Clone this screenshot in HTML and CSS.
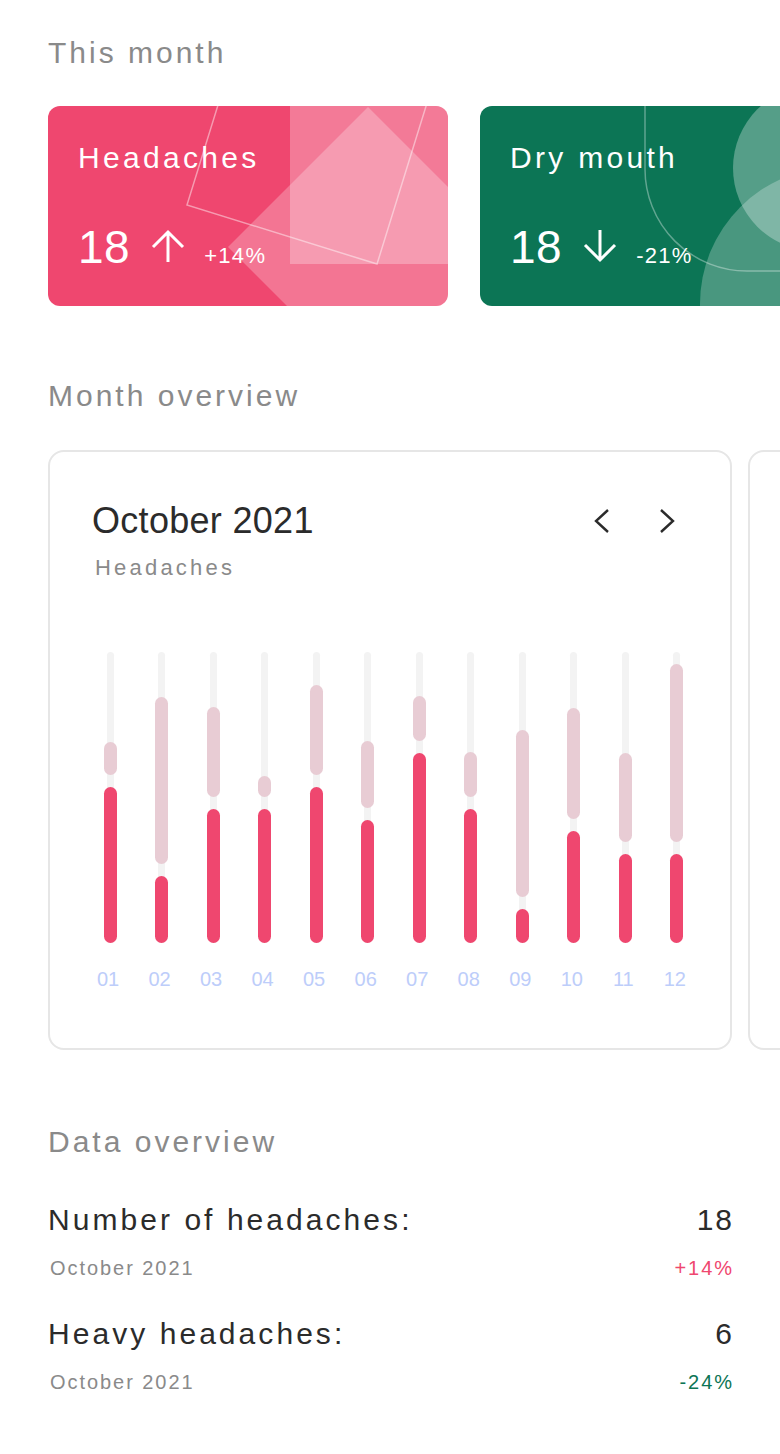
FILE: index.html
```html
<!DOCTYPE html>

<html>
    <head>
        <title>Overview</title>
        <link rel="stylesheet" href="styles.css">
    </head>
    <body>
        <div class = "block block_first">
            <h2 class = "block_title">This month</h2>
            <div class = "strip">
                <div class = "stat_card stat_pink">
                    <svg class = "stat_decor" viewBox = "0 0 400 200" width = "400" height = "200">
                        <rect x = "242" y = "0" width = "158" height = "158" fill = "#ffffff" fill-opacity = "0.28"/>
                        <polygon points = "320,1 460,141 320,281 180,141" fill = "#ffffff" fill-opacity = "0.25"/>
                        <rect x = "-99.5" y = "-99.5" width = "199" height = "199" fill = "none" stroke = "#ffffff" stroke-opacity = "0.45" stroke-width = "1.5" transform = "translate(263.5 33.5) rotate(17.25)"/>
                    </svg>
                    <div class = "stat_name">Headaches</div>
                    <div class = "stat_row">
                        <span class = "stat_num">18</span>
                        <svg class = "stat_arrow" viewBox = "0 0 34 34" width = "34" height = "34">
                            <path d = "M17 33 V3 M2 18 L17 3 L32 18" fill = "none" stroke = "#ffffff" stroke-width = "3"/>
                        </svg>
                        <span class = "stat_pct">+14%</span>
                    </div>
                </div>
                <div class = "stat_card stat_green">
                    <svg class = "stat_decor" viewBox = "0 0 400 200" width = "400" height = "200">
                        <circle cx = "336" cy = "62" r = "83" fill = "#ffffff" fill-opacity = "0.3"/>
                        <circle cx = "357" cy = "198" r = "137" fill = "#ffffff" fill-opacity = "0.25"/>
                        <path d = "M165 -5 V63 A102 102 0 0 0 267 165 H420" fill = "none" stroke = "#ffffff" stroke-opacity = "0.35" stroke-width = "1.5"/>
                    </svg>
                    <div class = "stat_name">Dry mouth</div>
                    <div class = "stat_row">
                        <span class = "stat_num">18</span>
                        <svg class = "stat_arrow" viewBox = "0 0 34 34" width = "34" height = "34">
                            <path d = "M17 1 V31 M2 16 L17 31 L32 16" fill = "none" stroke = "#ffffff" stroke-width = "3"/>
                        </svg>
                        <span class = "stat_pct">-21%</span>
                    </div>
                </div>
            </div>
        </div>

        <div class = "block block_month">
            <h2 class = "block_title">Month overview</h2>
            <div class = "strip strip_tight">
                <div class = "chart_card">
                    <div class = "chart_head">
                        <div class = "chart_month">October 2021</div>
                        <div class = "chart_nav">
                            <svg viewBox = "0 0 20 28" width = "20" height = "28"><polyline points = "16,3 4,14 16,25" fill = "none" stroke = "#2b2b2b" stroke-width = "2.4"/></svg>
                            <svg viewBox = "0 0 20 28" width = "20" height = "28"><polyline points = "4,3 16,14 4,25" fill = "none" stroke = "#2b2b2b" stroke-width = "2.4"/></svg>
                        </div>
                    </div>
                    <div class = "chart_sub">Headaches</div>
                    <div class = "chart">
                        <div class = "chart_col"><div class = "track"><div class = "seg seg_light" style = "height: 33px"></div><div class = "seg seg_main" style = "height: 156px"></div></div><span class = "day">01</span></div>
                        <div class = "chart_col"><div class = "track"><div class = "seg seg_light" style = "height: 167px"></div><div class = "seg seg_main" style = "height: 67px"></div></div><span class = "day">02</span></div>
                        <div class = "chart_col"><div class = "track"><div class = "seg seg_light" style = "height: 90px"></div><div class = "seg seg_main" style = "height: 134px"></div></div><span class = "day">03</span></div>
                        <div class = "chart_col"><div class = "track"><div class = "seg seg_light" style = "height: 21px"></div><div class = "seg seg_main" style = "height: 134px"></div></div><span class = "day">04</span></div>
                        <div class = "chart_col"><div class = "track"><div class = "seg seg_light" style = "height: 90px"></div><div class = "seg seg_main" style = "height: 156px"></div></div><span class = "day">05</span></div>
                        <div class = "chart_col"><div class = "track"><div class = "seg seg_light" style = "height: 67px"></div><div class = "seg seg_main" style = "height: 123px"></div></div><span class = "day">06</span></div>
                        <div class = "chart_col"><div class = "track"><div class = "seg seg_light" style = "height: 45px"></div><div class = "seg seg_main" style = "height: 190px"></div></div><span class = "day">07</span></div>
                        <div class = "chart_col"><div class = "track"><div class = "seg seg_light" style = "height: 45px"></div><div class = "seg seg_main" style = "height: 134px"></div></div><span class = "day">08</span></div>
                        <div class = "chart_col"><div class = "track"><div class = "seg seg_light" style = "height: 167px"></div><div class = "seg seg_main" style = "height: 34px"></div></div><span class = "day">09</span></div>
                        <div class = "chart_col"><div class = "track"><div class = "seg seg_light" style = "height: 111px"></div><div class = "seg seg_main" style = "height: 112px"></div></div><span class = "day">10</span></div>
                        <div class = "chart_col"><div class = "track"><div class = "seg seg_light" style = "height: 89px"></div><div class = "seg seg_main" style = "height: 89px"></div></div><span class = "day">11</span></div>
                        <div class = "chart_col"><div class = "track"><div class = "seg seg_light" style = "height: 178px"></div><div class = "seg seg_main" style = "height: 89px"></div></div><span class = "day">12</span></div>
                    </div>
                </div>
                <div class = "chart_card chart_next"></div>
            </div>
        </div>

        <div class = "block block_data">
            <h2 class = "block_title">Data overview</h2>
            <div class = "data_row data_first">
                <div class = "data_name">Number of headaches:</div>
                <div class = "data_value">18</div>
                <div class = "data_date">October 2021</div>
                <div class = "data_pct up">+14%</div>
            </div>
            <div class = "data_row">
                <div class = "data_name">Heavy headaches:</div>
                <div class = "data_value">6</div>
                <div class = "data_date">October 2021</div>
                <div class = "data_pct down">-24%</div>
            </div>
        </div>
    </body>
</html>
```

FILE: styles.css
```css
html, body {
    margin: 0;      padding: 0;
    width: 780px;   height: 1454px;
    overflow: hidden;

    --pink:         #ef476f;
    --pink-light:   #e8ccd4;
    --green:        #0c7555;
    --text:         #2b2b2b;
    --muted:        #8a8a8a;
    --track:        #f3f3f3;
    --day:          #bdcdfa;

    background-color: #ffffff;
    color: var(--text);
    font-family: "Liberation Sans", Arial, sans-serif;
}

/* Blocks */
.block {
    padding-left: 48px;
}
.block_first { padding-top: 35px; }
.block_month { margin-top: 72px; }
.block_data  { margin-top: 74px; padding-right: 48px; }

.block_title {
    margin: 0;
    font-size: 30px;    line-height: 36px;
    font-weight: normal;
    letter-spacing: 3px;
    color: var(--muted);
}

.strip {
    display: flex;
    gap: 32px;
    margin-top: 35px;
}
.strip_tight {
    gap: 16px;
    margin-top: 36px;
}

/* Stat cards */
.stat_card {
    position: relative;
    flex: 0 0 400px;
    height: 200px;
    box-sizing: border-box;
    padding: 34px 29px 0 30px;
    border-radius: 12px;
    overflow: hidden;
    color: #ffffff;
}
.stat_pink  { background-color: var(--pink); }
.stat_green { background-color: var(--green); }

.stat_decor {
    position: absolute;
    top: 0;     left: 0;
}

.stat_name, .stat_row {
    position: relative;
}
.stat_name {
    font-size: 30px;    line-height: 36px;
    letter-spacing: 3.3px;
}
.stat_row {
    display: flex;
    align-items: baseline;
    margin-top: 44px;
    line-height: 54px;
}
.stat_num {
    font-size: 46px;
    letter-spacing: 0.5px;
}
.stat_arrow {
    margin-left: 21px;  margin-right: 19px;
}
.stat_pct {
    font-size: 22px;
    letter-spacing: 1.3px;
}

/* Chart card */
.chart_card {
    flex: 0 0 684px;
    height: 600px;
    box-sizing: border-box;
    padding: 48px 34px 0 42px;
    border: solid 2px #e6e6e6;
    border-radius: 16px;
}

.chart_head {
    display: flex;
    align-items: center;
    justify-content: space-between;
}
.chart_month {
    font-size: 36px;    line-height: 42px;
    letter-spacing: 0.3px;
    color: var(--text);
}
.chart_nav {
    display: flex;
    gap: 45px;
    margin-right: 19px;
}
.chart_nav svg { display: block; }

.chart_sub {
    margin-top: 13px;   margin-left: 3px;
    font-size: 22px;    line-height: 26px;
    letter-spacing: 3.2px;
    color: var(--muted);
}

.chart {
    display: flex;
    justify-content: space-between;
    margin-top: 71px;
    margin-left: -1px;
}
.chart_col {
    display: flex;
    flex-direction: column;
    align-items: center;
    width: 38px;
}

.track {
    display: flex;
    flex-direction: column;
    justify-content: flex-end;
    align-items: center;
    width: 7px;     height: 291px;
    border-radius: 4px;
    background-color: var(--track);
}
.seg {
    flex: 0 0 auto;
    width: 13px;
    border-radius: 7px;
}
.seg_light {
    background-color: var(--pink-light);
    margin-bottom: 12px;
}
.seg_main {
    background-color: var(--pink);
}

.day {
    margin-top: 24px;   margin-right: 4px;
    font-size: 20px;    line-height: 24px;
    color: var(--day);
}

/* Data overview */
.data_row {
    display: grid;
    grid-template-columns: 1fr auto;
    row-gap: 18px;
    margin-top: 36px;
}
.data_first { margin-top: 42px; }

.data_name, .data_value {
    font-size: 30px;    line-height: 36px;
    color: var(--text);
}
.data_name  { letter-spacing: 3.05px; }
.data_value { letter-spacing: 2px;  margin-right: -2px; text-align: right; }

.data_date, .data_pct {
    font-size: 20px;    line-height: 24px;
    letter-spacing: 1.95px;
}
.data_date  { color: var(--muted); margin-left: 2px; }
.data_pct   { text-align: right; margin-right: -2px; }
.up         { color: var(--pink); }
.down       { color: var(--green); }
```
